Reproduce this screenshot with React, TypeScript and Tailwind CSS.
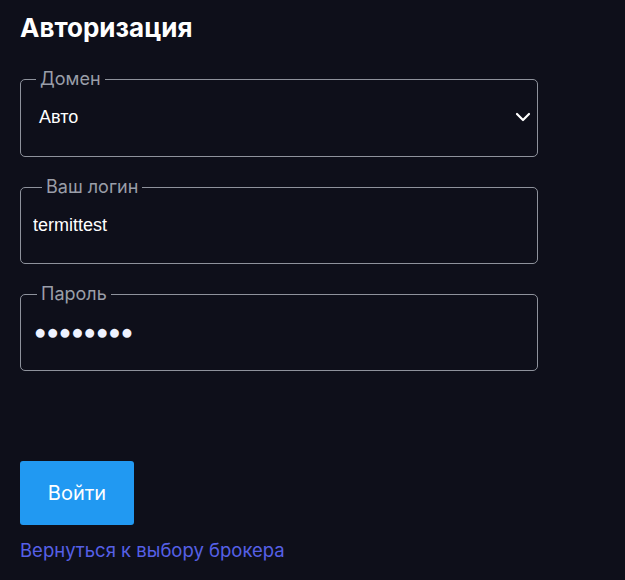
import { ChevronDown } from 'lucide-react';

const field = "m-0 min-w-0 rounded-[5px] border border-[#8e929c] p-0";
const legend = "px-[4px] text-[18px] leading-[20px] text-[#9a9ea8] font-['Inter',sans-serif]";

export default function App() {
  return (
    <div className="min-h-[580px] w-full bg-[#0e0f1a] px-5 pt-[12px] font-['Inter',sans-serif]">
      <h1 className="text-[26px] font-bold leading-[32px] text-white">Авторизация</h1>

      <form className="mt-[25px] flex w-[518px] flex-col gap-5" onSubmit={(e) => e.preventDefault()}>
        {/* Домен */}
        <fieldset className={field}>
          <legend className={`${legend} ml-[15px]`}>Домен</legend>
          <div className="mb-[19px] mt-[8px] flex h-[40px] items-center justify-between pl-[18px] pr-[2px]">
            <span className="font-['Liberation_Sans',Arial,sans-serif] text-[18px] text-white">Авто</span>
            <ChevronDown className="h-[24px] w-[24px] text-white" strokeWidth={2.2} />
          </div>
        </fieldset>

        {/* Логин */}
        <fieldset className={field}>
          <legend className={`${legend} ml-[21px]`}>Ваш логин</legend>
          <input
            type="text"
            defaultValue="termittest"
            className="mb-[18px] mt-[8px] block h-[40px] w-full bg-transparent pl-[12px] font-['Liberation_Sans',Arial,sans-serif] text-[18px] text-white outline-none"
          />
        </fieldset>

        {/* Пароль */}
        <fieldset className={field}>
          <legend className={`${legend} ml-[16px]`}>Пароль</legend>
          <div className="mb-[18px] mt-[8px] flex h-[40px] items-center pl-[13px]">
            <span className="font-['Liberation_Sans',Arial,sans-serif] text-[20.5px] leading-none text-[#eef2ff]">
              ●●●●●●●●
            </span>
          </div>
        </fieldset>

        <button
          type="submit"
          className="mt-[70px] h-[64px] w-[114px] rounded-[3px] bg-[#2199f2] text-[20px] text-white"
        >
          Войти
        </button>
      </form>

      <a href="#" className="mt-[13px] block text-[18.5px] leading-[24px] text-[#5660e6]">
        Вернуться к выбору брокера
      </a>
    </div>
  );
}
